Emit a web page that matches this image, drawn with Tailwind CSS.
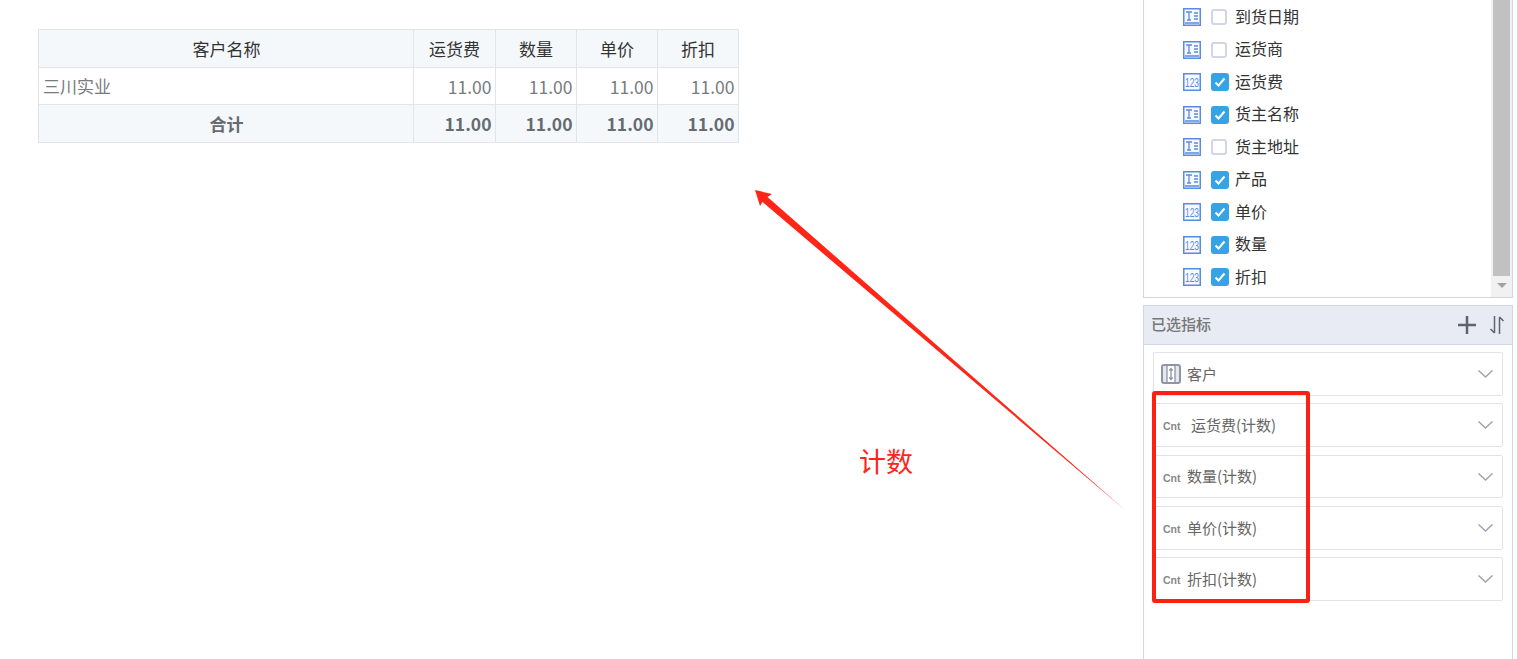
<!DOCTYPE html>
<html lang="en">
<head>
    <meta charset="UTF-8">
    <meta name="viewport" content="width=device-width, initial-scale=1.0">
    <title>Report</title>
    <script src="https://cdn.jsdelivr.net/npm/@tailwindcss/browser@4"></script>
</head>
<body class="relative h-screen overflow-hidden bg-white font-['Noto_Sans_CJK_SC','Noto_Sans',sans-serif]">
    <div class="flex h-[659px]">
        <!-- report area -->
        <div class="flex-1 pl-[38px] pt-[29px]">
            <table class="w-[700px] table-fixed border-collapse text-[17px] text-[#777b80]">
                <colgroup>
                    <col class="w-[375px]"><col class="w-[82px]"><col class="w-[81px]"><col class="w-[81px]"><col class="w-[81px]">
                </colgroup>
                <tr class="h-[38px] bg-[#f5f8fb] text-[#333]">
                    <th class="border border-[#e1e5ea] pl-[1px] font-normal">客户名称</th>
                    <th class="border border-[#e1e5ea] font-normal">运货费</th>
                    <th class="border border-[#e1e5ea] font-normal">数量</th>
                    <th class="border border-[#e1e5ea] font-normal">单价</th>
                    <th class="border border-[#e1e5ea] font-normal">折扣</th>
                </tr>
                <tr class="h-[37px]">
                    <td class="border border-[#e1e5ea] pl-[4px]">三川实业</td>
                    <td class="border border-[#e1e5ea] pr-[3.500px] pt-[2px] text-right text-[17.500px]">11.00</td>
                    <td class="border border-[#e1e5ea] pr-[3.500px] pt-[2px] text-right text-[17.500px]">11.00</td>
                    <td class="border border-[#e1e5ea] pr-[3.500px] pt-[2px] text-right text-[17.500px]">11.00</td>
                    <td class="border border-[#e1e5ea] pr-[3.500px] pt-[2px] text-right text-[17.500px]">11.00</td>
                </tr>
                <tr class="h-[38px] bg-[#f5f8fb] font-bold text-[#666b70]">
                    <td class="border border-[#e1e5ea] pl-[1px] text-center">合计</td>
                    <td class="border border-[#e1e5ea] pr-[3.500px] pt-[2px] text-right text-[17.500px]">11.00</td>
                    <td class="border border-[#e1e5ea] pr-[3.500px] pt-[2px] text-right text-[17.500px]">11.00</td>
                    <td class="border border-[#e1e5ea] pr-[3.500px] pt-[2px] text-right text-[17.500px]">11.00</td>
                    <td class="border border-[#e1e5ea] pr-[3.500px] pt-[2px] text-right text-[17.500px]">11.00</td>
                </tr>
            </table>
        </div>

        <!-- right column -->
        <div class="mr-[4px] flex w-[370px] flex-col gap-[7px]">
            <div class="flex h-[298px] border-x border-b border-[#d0d6e4]">
                <ul class="flex-1 pl-[39px] pt-[1px] text-[16px] text-[#333]">
                    <li class="flex h-[32.5px] items-center">
                        <svg class="h-[18px] w-[18px]" viewBox="0 0 18 18"><rect x=".75" y=".75" width="16.500" height="16.500" fill="#f7f9fe" stroke="#5b8be0" stroke-width="1.500"/><path d="M3 4h6M6 4v8M4 12h4M11 5h4M11 8h4M11 11h4M2 15h14" stroke="#5b8be0" stroke-width="1.300" fill="none"/></svg>
                        <span class="ml-[10px] h-[16px] w-[16px] rounded-[3px] border-2 border-[#d0d6e4]"></span>
                        <span class="mb-[2.600px] ml-[8px]">到货日期</span>
                    </li>
                    <li class="flex h-[32.5px] items-center">
                        <svg class="h-[18px] w-[18px]" viewBox="0 0 18 18"><rect x=".75" y=".75" width="16.500" height="16.500" fill="#f7f9fe" stroke="#5b8be0" stroke-width="1.500"/><path d="M3 4h6M6 4v8M4 12h4M11 5h4M11 8h4M11 11h4M2 15h14" stroke="#5b8be0" stroke-width="1.300" fill="none"/></svg>
                        <span class="ml-[10px] h-[16px] w-[16px] rounded-[3px] border-2 border-[#d0d6e4]"></span>
                        <span class="mb-[2.600px] ml-[8px]">运货商</span>
                    </li>
                    <li class="flex h-[32.5px] items-center">
                        <svg class="h-[18px] w-[18px]" viewBox="0 0 18 18"><rect x=".75" y=".75" width="16.500" height="16.500" fill="#f7f9fe" stroke="#5b8be0" stroke-width="1.500"/><text transform="translate(9 13.500) scale(1 1.450)" text-anchor="middle" font-size="8.500" font-family="Liberation Sans" fill="#5b8be0">123</text></svg>
                        <span class="ml-[10px] flex h-[18px] w-[18px] items-center justify-center rounded-[3px] bg-[#35a3e4]"><svg class="h-[12px] w-[12px]" viewBox="0 0 12 12"><path d="M1.5 6.5l3 3 6-7" stroke="#fff" stroke-width="2" fill="none"/></svg></span>
                        <span class="mb-[2.600px] ml-[6px]">运货费</span>
                    </li>
                    <li class="flex h-[32.5px] items-center">
                        <svg class="h-[18px] w-[18px]" viewBox="0 0 18 18"><rect x=".75" y=".75" width="16.500" height="16.500" fill="#f7f9fe" stroke="#5b8be0" stroke-width="1.500"/><path d="M3 4h6M6 4v8M4 12h4M11 5h4M11 8h4M11 11h4M2 15h14" stroke="#5b8be0" stroke-width="1.300" fill="none"/></svg>
                        <span class="ml-[10px] flex h-[18px] w-[18px] items-center justify-center rounded-[3px] bg-[#35a3e4]"><svg class="h-[12px] w-[12px]" viewBox="0 0 12 12"><path d="M1.5 6.5l3 3 6-7" stroke="#fff" stroke-width="2" fill="none"/></svg></span>
                        <span class="mb-[2.600px] ml-[6px]">货主名称</span>
                    </li>
                    <li class="flex h-[32.5px] items-center">
                        <svg class="h-[18px] w-[18px]" viewBox="0 0 18 18"><rect x=".75" y=".75" width="16.500" height="16.500" fill="#f7f9fe" stroke="#5b8be0" stroke-width="1.500"/><path d="M3 4h6M6 4v8M4 12h4M11 5h4M11 8h4M11 11h4M2 15h14" stroke="#5b8be0" stroke-width="1.300" fill="none"/></svg>
                        <span class="ml-[10px] h-[16px] w-[16px] rounded-[3px] border-2 border-[#d0d6e4]"></span>
                        <span class="mb-[2.600px] ml-[8px]">货主地址</span>
                    </li>
                    <li class="flex h-[32.5px] items-center">
                        <svg class="h-[18px] w-[18px]" viewBox="0 0 18 18"><rect x=".75" y=".75" width="16.500" height="16.500" fill="#f7f9fe" stroke="#5b8be0" stroke-width="1.500"/><path d="M3 4h6M6 4v8M4 12h4M11 5h4M11 8h4M11 11h4M2 15h14" stroke="#5b8be0" stroke-width="1.300" fill="none"/></svg>
                        <span class="ml-[10px] flex h-[18px] w-[18px] items-center justify-center rounded-[3px] bg-[#35a3e4]"><svg class="h-[12px] w-[12px]" viewBox="0 0 12 12"><path d="M1.5 6.5l3 3 6-7" stroke="#fff" stroke-width="2" fill="none"/></svg></span>
                        <span class="mb-[2.600px] ml-[6px]">产品</span>
                    </li>
                    <li class="flex h-[32.5px] items-center">
                        <svg class="h-[18px] w-[18px]" viewBox="0 0 18 18"><rect x=".75" y=".75" width="16.500" height="16.500" fill="#f7f9fe" stroke="#5b8be0" stroke-width="1.500"/><text transform="translate(9 13.500) scale(1 1.450)" text-anchor="middle" font-size="8.500" font-family="Liberation Sans" fill="#5b8be0">123</text></svg>
                        <span class="ml-[10px] flex h-[18px] w-[18px] items-center justify-center rounded-[3px] bg-[#35a3e4]"><svg class="h-[12px] w-[12px]" viewBox="0 0 12 12"><path d="M1.5 6.5l3 3 6-7" stroke="#fff" stroke-width="2" fill="none"/></svg></span>
                        <span class="mb-[2.600px] ml-[6px]">单价</span>
                    </li>
                    <li class="flex h-[32.5px] items-center">
                        <svg class="h-[18px] w-[18px]" viewBox="0 0 18 18"><rect x=".75" y=".75" width="16.500" height="16.500" fill="#f7f9fe" stroke="#5b8be0" stroke-width="1.500"/><text transform="translate(9 13.500) scale(1 1.450)" text-anchor="middle" font-size="8.500" font-family="Liberation Sans" fill="#5b8be0">123</text></svg>
                        <span class="ml-[10px] flex h-[18px] w-[18px] items-center justify-center rounded-[3px] bg-[#35a3e4]"><svg class="h-[12px] w-[12px]" viewBox="0 0 12 12"><path d="M1.5 6.5l3 3 6-7" stroke="#fff" stroke-width="2" fill="none"/></svg></span>
                        <span class="mb-[2.600px] ml-[6px]">数量</span>
                    </li>
                    <li class="flex h-[32.5px] items-center">
                        <svg class="h-[18px] w-[18px]" viewBox="0 0 18 18"><rect x=".75" y=".75" width="16.500" height="16.500" fill="#f7f9fe" stroke="#5b8be0" stroke-width="1.500"/><text transform="translate(9 13.500) scale(1 1.450)" text-anchor="middle" font-size="8.500" font-family="Liberation Sans" fill="#5b8be0">123</text></svg>
                        <span class="ml-[10px] flex h-[18px] w-[18px] items-center justify-center rounded-[3px] bg-[#35a3e4]"><svg class="h-[12px] w-[12px]" viewBox="0 0 12 12"><path d="M1.5 6.5l3 3 6-7" stroke="#fff" stroke-width="2" fill="none"/></svg></span>
                        <span class="mb-[2.600px] ml-[6px]">折扣</span>
                    </li>
                </ul>
                <!-- scrollbar -->
                <div class="flex w-[21px] flex-col bg-[#f1f1f1] pl-[2px]">
                    <div class="h-[276px] w-[17px] bg-[#c1c1c1]"></div>
                    <div class="ml-[4px] mt-[7px] h-0 w-0 border-x-[5px] border-t-[5px] border-x-transparent border-t-[#a3a3a3]"></div>
                </div>
            </div>

            <div class="flex flex-1 flex-col border-x border-t border-[#d0d6e4]">
                <div class="flex h-[39px] items-center border-b border-[#d0d6e4] bg-[#e8ebf3] pl-[7px] pr-[7px]">
                    <span class="mb-[2px] flex-1 text-[15px] font-medium text-[#777]">已选指标</span>
                    <svg class="h-[18px] w-[18px]" viewBox="0 0 18 18"><path d="M9 0v18M0 9h18" stroke="#5c6470" stroke-width="2.500" fill="none"/></svg>
                    <svg class="ml-[13px] h-[20px] w-[16px]" viewBox="0 0 16 20"><path d="M5.500 1v17M5.500 18l-4-4M10.500 19V2M10.500 2l4 4" stroke="#5c6470" stroke-width="1.500" fill="none"/></svg>
                </div>
                <div class="flex flex-col gap-[7px] pl-[9px] pr-[9px] pt-[7px]">
                    <div class="flex h-[44px] items-center rounded-[2px] border border-[#e1e3ea] pl-[7px] pr-[9px] text-[15px] text-[#666]">
                        <svg class="h-[20px] w-[20px]" viewBox="0 0 20 20"><rect x="1" y="1" width="18" height="18" rx="2" fill="#e4e7ec" stroke="#8e96a3" stroke-width="2"/><rect x="6" y="2" width="8" height="16" fill="#fff"/><path d="M6 1v18M14 1v18M10 4.500v11M8.300 6.500L10 4.500l1.700 2M8.300 13.500L10 15.500l1.700-2" stroke="#8e96a3" stroke-width="1.300" fill="none"/></svg>
                        <span class="ml-[6px] flex-1">客户</span>
                        <svg class="h-[8px] w-[15px]" viewBox="0 0 15 8"><path d="M.5.5l7 6.500 7-6.500" stroke="#a0a4ae" stroke-width="1.500" fill="none"/></svg>
                    </div>
                    <div class="mb-[1px] flex h-[44px] items-center rounded-[2px] border border-[#e1e3ea] pl-[9px] pr-[9px] text-[15px] text-[#666]">
                        <span class="mt-[4px] w-[19px] font-['Liberation_Sans'] text-[10.500px] font-bold text-[#888]">Cnt</span>
                        <span class="ml-[9px] flex-1">运货费(计数)</span>
                        <svg class="h-[8px] w-[15px]" viewBox="0 0 15 8"><path d="M.5.5l7 6.500 7-6.500" stroke="#a0a4ae" stroke-width="1.500" fill="none"/></svg>
                    </div>
                    <div class="mb-[1px] flex h-[43px] items-center rounded-[2px] border border-[#e1e3ea] pl-[9px] pr-[9px] text-[15px] text-[#666]">
                        <span class="mt-[4px] w-[19px] font-['Liberation_Sans'] text-[10.500px] font-bold text-[#888]">Cnt</span>
                        <span class="ml-[5px] flex-1">数量(计数)</span>
                        <svg class="h-[8px] w-[15px]" viewBox="0 0 15 8"><path d="M.5.5l7 6.500 7-6.500" stroke="#a0a4ae" stroke-width="1.500" fill="none"/></svg>
                    </div>
                    <div class="flex h-[44px] items-center rounded-[2px] border border-[#e1e3ea] pl-[9px] pr-[9px] text-[15px] text-[#666]">
                        <span class="mt-[4px] w-[19px] font-['Liberation_Sans'] text-[10.500px] font-bold text-[#888]">Cnt</span>
                        <span class="ml-[5px] flex-1">单价(计数)</span>
                        <svg class="h-[8px] w-[15px]" viewBox="0 0 15 8"><path d="M.5.5l7 6.500 7-6.500" stroke="#a0a4ae" stroke-width="1.500" fill="none"/></svg>
                    </div>
                    <div class="flex h-[44px] items-center rounded-[2px] border border-[#e1e3ea] pl-[9px] pr-[9px] text-[15px] text-[#666]">
                        <span class="mt-[4px] w-[19px] font-['Liberation_Sans'] text-[10.500px] font-bold text-[#888]">Cnt</span>
                        <span class="ml-[5px] flex-1">折扣(计数)</span>
                        <svg class="h-[8px] w-[15px]" viewBox="0 0 15 8"><path d="M.5.5l7 6.500 7-6.500" stroke="#a0a4ae" stroke-width="1.500" fill="none"/></svg>
                    </div>
                </div>
            </div>
        </div>
    </div>

    <!-- annotations drawn over the screenshot -->
    <svg class="pointer-events-none absolute left-0 top-0 h-[659px] w-[1517px]" viewBox="0 0 1517 659">
        <polygon points="755,190 772,194 767.500,197 1125,510 762.500,202 760,206" fill="#ff2618"/>
    </svg>
    <span class="absolute left-[859px] top-[441px] text-[27px] leading-[40px] text-[#ff2618]">计数</span>
    <div class="pointer-events-none absolute left-[1152px] top-[391px] h-[212px] w-[158px] rounded-[3px] border-[4px] border-[#ff2015]"></div>
</body>
</html>
